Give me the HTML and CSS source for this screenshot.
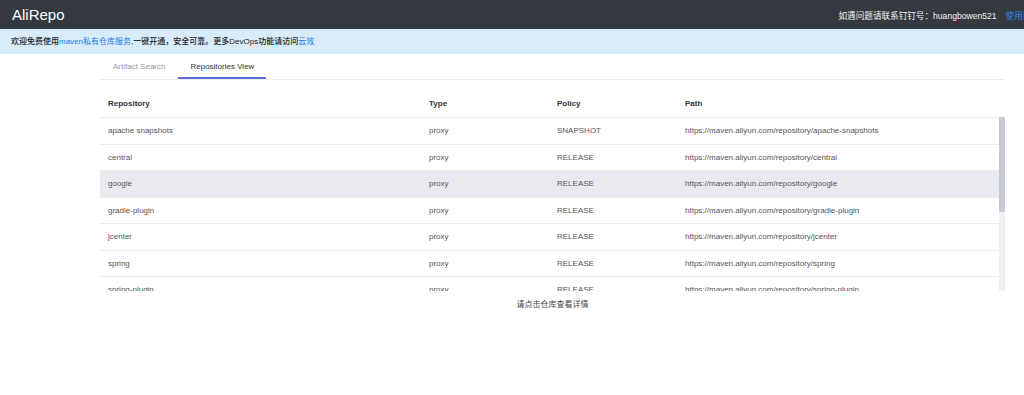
FILE: index.html
```html
<!DOCTYPE html>
<html lang="zh">
<head>
<meta charset="utf-8">
<title>AliRepo</title>
<link rel="stylesheet" href="styles.css">
</head>
<body>
<header class="topbar">
  <span class="brand">AliRepo</span>
  <div class="contact">如遇问题请联系钉钉号：huangbowen521<a class="help" href="#">使用帮助</a></div>
</header>
<div class="notice">欢迎免费使用<a href="#">maven私有仓库服务</a>,一键开通，安全可靠。更多DevOps功能请访问<a href="#">云效</a></div>
<main class="main">
  <nav class="tabs">
    <span class="tab">Artifact Search</span>
    <span class="tab active">Repositories View</span>
  </nav>
  <div class="table">
    <div class="row head">
      <span>Repository</span><span>Type</span><span>Policy</span><span>Path</span>
    </div>
    <div class="body">
      <div class="rows">
        <div class="row"><span>apache snapshots</span><span>proxy</span><span>SNAPSHOT</span><span>https://maven.aliyun.com/repository/apache-snapshots</span></div>
        <div class="row"><span>central</span><span>proxy</span><span>RELEASE</span><span>https://maven.aliyun.com/repository/central</span></div>
        <div class="row hover"><span>google</span><span>proxy</span><span>RELEASE</span><span>https://maven.aliyun.com/repository/google</span></div>
        <div class="row"><span>gradle-plugin</span><span>proxy</span><span>RELEASE</span><span>https://maven.aliyun.com/repository/gradle-plugin</span></div>
        <div class="row"><span>jcenter</span><span>proxy</span><span>RELEASE</span><span>https://maven.aliyun.com/repository/jcenter</span></div>
        <div class="row"><span>spring</span><span>proxy</span><span>RELEASE</span><span>https://maven.aliyun.com/repository/spring</span></div>
        <div class="row"><span>spring-plugin</span><span>proxy</span><span>RELEASE</span><span>https://maven.aliyun.com/repository/spring-plugin</span></div>
        <div class="row"><span>public</span><span>group</span><span>RELEASE</span><span>https://maven.aliyun.com/repository/public</span></div>
        <div class="row"><span>releases</span><span>hosted</span><span>RELEASE</span><span>https://maven.aliyun.com/repository/releases</span></div>
        <div class="row"><span>snapshots</span><span>hosted</span><span>SNAPSHOT</span><span>https://maven.aliyun.com/repository/snapshots</span></div>
        <div class="row"><span>grails-core</span><span>proxy</span><span>RELEASE</span><span>https://maven.aliyun.com/repository/grails-core</span></div>
        <div class="row"><span>mapr</span><span>proxy</span><span>RELEASE</span><span>https://maven.aliyun.com/repository/mapr</span></div>
      </div>
      <div class="scrollbar"><div class="thumb"></div></div>
    </div>
  </div>
  <p class="hint">请点击仓库查看详情</p>
</main>
</body>
</html>
```

FILE: styles.css
```css
html, body {
  margin: 0;
  padding: 0;
  background: #fff;
  font-family: "Liberation Sans", "Noto Sans CJK SC", sans-serif;
  color: #333;
  overflow: hidden;
}

a {
  color: #1e7be6;
  text-decoration: none;
}

.topbar {
  height: 29px;
  background: #343a40;
  display: flex;
  align-items: center;
  justify-content: space-between;
  padding-left: 12px;
  overflow: hidden;
  white-space: nowrap;
}

.brand {
  color: #fff;
  font-size: 15px;
  line-height: 29px;
}

.contact {
  color: #f2f2f2;
  font-size: 8.6px;
  display: flex;
  gap: 9px;
  margin-right: -16px;
}

.help {
  color: #2f7ff0;
}

.notice {
  height: 25px;
  line-height: 25px;
  background: #d9ecfb;
  padding-left: 11px;
  font-size: 8px;
  color: #222;
  font-weight: 500;
  white-space: nowrap;
}

.notice a {
  font-weight: 400;
}

.main {
  margin-left: 100px;
  width: 905px;
}

.tabs {
  margin-top: 3px;
  display: flex;
  padding-left: 1px;
  border-bottom: 1px solid #ececec;
}

.tab {
  font-size: 8px;
  line-height: 12px;
  padding: 4px 12px;
  border-bottom: 2px solid transparent;
  color: #999;
}

.tab.active {
  color: #333;
  margin-left: 1px;
  border-bottom-color: #5b6bd5;
}

.table {
  font-size: 8px;
}

.row {
  display: grid;
  grid-template-columns: 321px 128px 128px 1fr;
  box-sizing: border-box;
  height: 26.5px;
  align-items: center;
  border-top: 1px solid #ececec;
  color: #555;
}

.row span {
  padding-left: 8px;
  white-space: nowrap;
}

.row.head {
  border-top: none;
  height: 37px;
  padding-top: 10px;
  font-weight: 700;
  color: #333;
  margin-right: 6px;
}

.row.hover {
  background: #e9eaef;
}

.body {
  height: 174px;
  display: flex;
  overflow: hidden;
}

.rows {
  flex: 1;
  min-width: 0;
}

.scrollbar {
  width: 6px;
  height: 174px;
  flex: none;
  background: #efeff4;
}

.thumb {
  height: 95px;
  background: #c8cad6;
}

.hint {
  margin: 8px 0 0;
  text-align: center;
  font-size: 8px;
  line-height: 12px;
  color: #444;
}
```
